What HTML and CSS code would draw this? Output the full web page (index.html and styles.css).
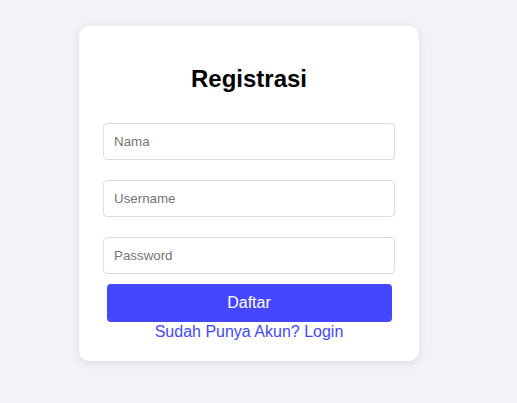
FILE: index.html
```html
<!DOCTYPE html>
<html lang="id">
<head>
<meta charset="utf-8">
<title>Registrasi</title>
<link rel="stylesheet" href="styles.css">
</head>
<body>
<div class="card">
  <h2 class="title">Registrasi</h2>
  <form class="form">
    <input class="field" type="text" placeholder="Nama">
    <input class="field" type="text" placeholder="Username">
    <input class="field field-last" type="password" placeholder="Password">
    <button class="btn" type="button">Daftar</button>
  </form>
  <div class="footer"><a class="link" href="#">Sudah Punya Akun? Login</a></div>
</div>
</body>
</html>
```
FILE: styles.css
```css
html, body {
  margin: 0;
  padding: 0;
}
body {
  background: #f4f2f9;
  font-family: "Liberation Sans", Arial, sans-serif;
  padding: 26px 0 0 79px;
  min-height: 403px;
  box-sizing: border-box;
}
.card {
  width: 340px;
  box-sizing: border-box;
  background: #ffffff;
  border-radius: 10px;
  box-shadow: 0 2px 10px rgba(0, 0, 0, 0.1);
  padding: 20px 24px 20px;
}
.title {
  margin: 19px 0 30px;
  font-size: 24px;
  line-height: 28px;
  font-weight: bold;
  text-align: center;
  color: #000;
}
.form {
  display: flex;
  flex-direction: column;
  margin: 0;
}
.field {
  display: block;
  width: 100%;
  box-sizing: border-box;
  height: 37px;
  padding: 10px;
  border: 1px solid #dddddd;
  border-radius: 4px;
  font-family: "Liberation Sans", Arial, sans-serif;
  font-size: 13.333px;
  margin: 0 0 20px;
  outline: none;
}
.field-last {
  margin-bottom: 10px;
}
.field::placeholder {
  color: #757575;
}
.btn {
  display: block;
  width: 285px;
  height: 38px;
  margin: 0 auto;
  border: none;
  border-radius: 4px;
  background: #4447ff;
  color: #ffffff;
  font-family: "Liberation Sans", Arial, sans-serif;
  font-size: 16px;
  cursor: pointer;
}
.footer {
  text-align: center;
  font-size: 16px;
  line-height: 19px;
}
.link {
  color: #4447ff;
  text-decoration: none;
}
```
